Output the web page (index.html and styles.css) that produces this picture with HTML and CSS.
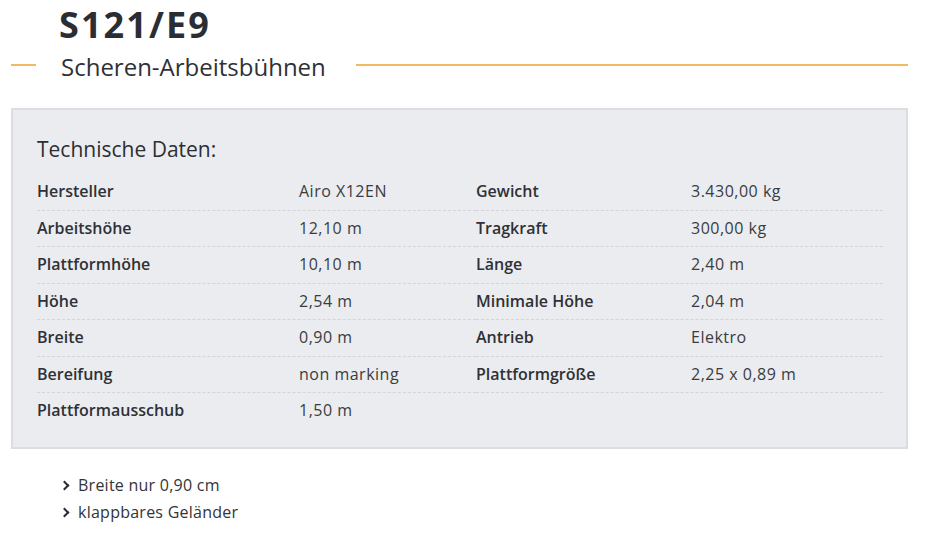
FILE: index.html
```html
<!DOCTYPE html>
<html lang="de">
<head>
<meta charset="utf-8">
<title>S121/E9</title>
<link rel="stylesheet" href="styles.css">
</head>
<body>
<div class="page">
  <header class="head">
    <h1 class="title">S121/E9</h1>
    <div class="subtitle-row">
      <span class="rule rule-short"></span>
      <h2 class="subtitle">Scheren-Arbeitsbühnen</h2>
      <span class="rule rule-long"></span>
    </div>
  </header>

  <section class="specs">
    <h3 class="specs-title">Technische Daten:</h3>
    <div class="spec-cols">
      <div class="spec-list spec-left">
        <div class="spec-row"><span class="label">Hersteller</span><span class="value">Airo X12EN</span></div>
        <div class="spec-row"><span class="label">Arbeitshöhe</span><span class="value">12,10 m</span></div>
        <div class="spec-row"><span class="label">Plattformhöhe</span><span class="value">10,10 m</span></div>
        <div class="spec-row"><span class="label">Höhe</span><span class="value">2,54 m</span></div>
        <div class="spec-row"><span class="label">Breite</span><span class="value">0,90 m</span></div>
        <div class="spec-row"><span class="label">Bereifung</span><span class="value">non marking</span></div>
        <div class="spec-row"><span class="label">Plattformausschub</span><span class="value">1,50 m</span></div>
      </div>
      <div class="spec-list spec-right">
        <div class="spec-row"><span class="label">Gewicht</span><span class="value">3.430,00 kg</span></div>
        <div class="spec-row"><span class="label">Tragkraft</span><span class="value">300,00 kg</span></div>
        <div class="spec-row"><span class="label">Länge</span><span class="value">2,40 m</span></div>
        <div class="spec-row"><span class="label">Minimale Höhe</span><span class="value">2,04 m</span></div>
        <div class="spec-row"><span class="label">Antrieb</span><span class="value">Elektro</span></div>
        <div class="spec-row"><span class="label">Plattformgröße</span><span class="value">2,25 x 0,89 m</span></div>
      </div>
    </div>
  </section>

  <ul class="features">
    <li>Breite nur 0,90 cm</li>
    <li>klappbares Geländer</li>
  </ul>
</div>
</body>
</html>
```

FILE: styles.css
```css
html, body {
  margin: 0;
  padding: 0;
  background: #ffffff;
}

body {
  font-family: "Open Sans", "Noto Sans", "Liberation Sans", sans-serif;
  color: #333438;
}

.page {
  padding: 7px 18px 0 11px;
}

.head {
  display: flex;
  flex-direction: column;
}

.title {
  margin: 0 0 10px 48px;
  font-size: 36px;
  line-height: 36px;
  font-weight: 700;
  letter-spacing: 2.1px;
  color: #2a2d33;
}

.subtitle-row {
  display: flex;
  align-items: flex-start;
}

.rule {
  display: block;
  height: 2px;
  background: #f3b860;
  margin-top: 11px;
}

.rule-short {
  width: 25px;
  margin-right: 25px;
}

.rule-long {
  flex: 1;
  margin-left: 30px;
}

.subtitle {
  margin: 0;
  font-size: 24px;
  line-height: 28px;
  font-weight: 400;
  color: #2f3136;
}

.specs {
  margin-top: 27px;
  background: #ebecef;
  border: 2px solid #dcdde0;
  padding: 26px 23px 18px 24px;
}

.specs-title {
  margin: 0 0 12px 0;
  font-size: 21px;
  line-height: 26px;
  font-weight: 400;
  color: #2c2e33;
}

.spec-cols {
  display: flex;
}

.spec-left {
  width: 439px;
}

.spec-right {
  flex: 1;
}

.spec-row {
  display: flex;
  font-size: 16px;
  line-height: 20px;
  padding: 7px 0 8.5px 0;
}

.spec-row + .spec-row {
  border-top: 1px dashed #d3d4d8;
}

.spec-right .spec-row:last-child {
  border-bottom: 1px dashed #d3d4d8;
}

.label {
  font-weight: 600;
  color: #2f3136;
}

.spec-left .label {
  width: 262px;
}

.spec-right .label {
  width: 215px;
}

.value {
  font-weight: 400;
  letter-spacing: 0.5px;
  color: #3a3c41;
}

.features {
  list-style: none;
  margin: 23px 0 0 0;
  padding: 0 0 0 50px;
}

.features li {
  display: flex;
  align-items: center;
  font-size: 16px;
  line-height: 27px;
  letter-spacing: 0.25px;
  color: #333438;
}

.features li::before {
  content: "";
  width: 5px;
  height: 5px;
  border-top: 2px solid #2a2d33;
  border-right: 2px solid #2a2d33;
  transform: rotate(45deg);
  margin: 1px 10px 0 0;
}
```
